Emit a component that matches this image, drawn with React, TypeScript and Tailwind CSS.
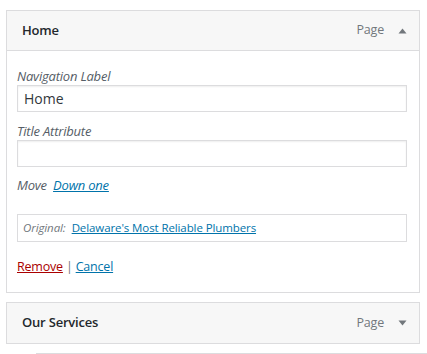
import React from 'react';

const font = { fontFamily: '"Open Sans", "Noto Sans", sans-serif' };

const Caret = ({ up }: { up?: boolean }) => (
  <svg width="9" height="6" viewBox="0 0 9 6" className="ml-[14px] text-[#72777c]">
    {up ? <path d="M0.5 5.5 L4.5 0.5 L8.5 5.5 Z" fill="currentColor" /> : <path d="M0.5 0.5 L4.5 5.5 L8.5 0.5 Z" fill="currentColor" />}
  </svg>
);

const ItemHeader = ({ title, open }: { title: string; open?: boolean }) => (
  <div className={`flex items-center h-[40px] pl-[15px] pr-[12px] bg-[#f7f7f7] ${open ? 'border-b border-[#dcdcde]' : ''}`}>
    <span className="text-[13px] font-semibold text-[#23282d] tracking-[-0.2px]">{title}</span>
    <span className="ml-auto text-[12.5px] text-[#72777c] tracking-[-0.2px]">Page</span>
    <Caret up={open} />
  </div>
);

export default function App() {
  return (
    <div className="bg-white w-[427px] h-[354px] overflow-hidden pt-[10px] pl-[6px]" style={font}>
      {/* open item */}
      <div className="w-[414px] border border-[#dcdcde] bg-white">
        <ItemHeader title="Home" open />
        <div className="pl-[10px] pr-[12px] pt-[16px] pb-[16px]">
          <label className="block text-[13px] italic text-[#555d66] leading-[18px] tracking-[-0.2px]">Navigation Label</label>
          <div className="h-[27px] border border-[#dcdcde] shadow-[inset_0_1px_2px_rgba(0,0,0,0.07)] px-[6px] flex items-center text-[14px] text-[#32373c]">Home</div>

          <label className="block mt-[10px] text-[13px] italic text-[#555d66] leading-[18px] tracking-[-0.2px]">Title Attribute</label>
          <div className="h-[27px] border border-[#dcdcde] shadow-[inset_0_1px_2px_rgba(0,0,0,0.07)]" />

          <div className="mt-[9px] text-[13px] italic text-[#555d66] leading-[18px] tracking-[-0.2px]">
            Move <a className="ml-[3px] text-[#0073aa] underline">Down one</a>
          </div>

          <div className="mt-[20px] h-[28px] border border-[#dcdcde] flex items-center px-[5px] text-[11.5px] leading-[18px] tracking-[-0.1px]">
            <span className="italic text-[#72777c]">Original:</span>
            <a className="ml-[6px] text-[#0073aa] underline">Delaware&apos;s Most Reliable Plumbers</a>
          </div>

          <div className="mt-[16px] text-[12.5px] leading-[18px] text-[#72777c] tracking-[-0.2px]">
            <a className="text-[#a00] underline">Remove</a> | <a className="text-[#0073aa] underline">Cancel</a>
          </div>
        </div>
      </div>

      {/* collapsed item */}
      <div className="mt-[9px] w-[414px] border border-[#dcdcde]">
        <ItemHeader title="Our Services" />
      </div>

      <div className="mt-[9px] ml-[30px] border-t border-[#dcdcde]" />
    </div>
  );
}
